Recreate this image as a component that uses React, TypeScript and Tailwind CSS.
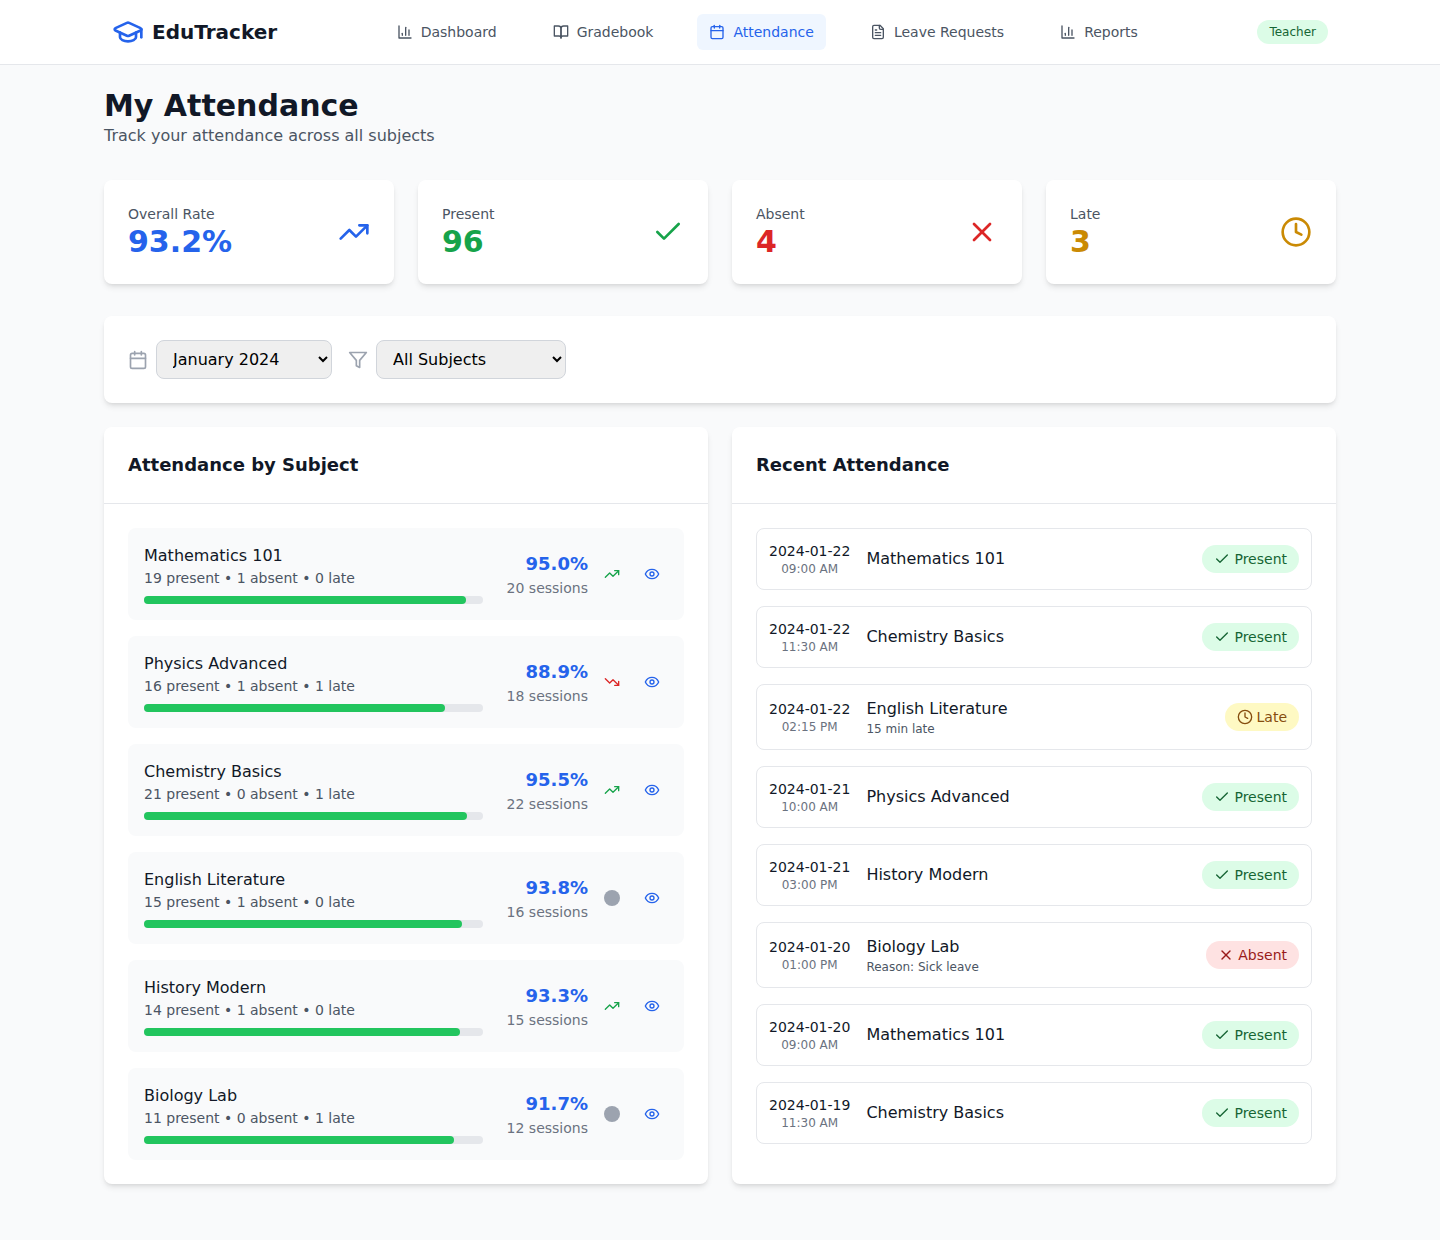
import type { ReactNode } from "react";

type IconProps = { className?: string };

function Icon({ className = "", children }: IconProps & { children: ReactNode }) {
  return (
    <svg
      viewBox="0 0 24 24"
      fill="none"
      stroke="currentColor"
      strokeWidth="2"
      strokeLinecap="round"
      strokeLinejoin="round"
      className={`shrink-0 ${className}`}
    >
      {children}
    </svg>
  );
}

const GraduationCap = (p: IconProps) => (
  <Icon {...p}>
    <path d="M21.42 10.922a1 1 0 0 0-.019-1.838L12.83 5.18a2 2 0 0 0-1.66 0L2.6 9.08a1 1 0 0 0 0 1.832l8.57 3.908a2 2 0 0 0 1.66 0z" />
    <path d="M22 10v6" />
    <path d="M6 12.5V16a6 3 0 0 0 12 0v-3.5" />
  </Icon>
);
const BarChart = (p: IconProps) => (
  <Icon {...p}>
    <path d="M3 3v18h18" />
    <path d="M18 17V9" />
    <path d="M13 17V5" />
    <path d="M8 17v-3" />
  </Icon>
);
const BookOpen = (p: IconProps) => (
  <Icon {...p}>
    <path d="M2 3h6a4 4 0 0 1 4 4v14a3 3 0 0 0-3-3H2z" />
    <path d="M22 3h-6a4 4 0 0 0-4 4v14a3 3 0 0 1 3-3h7z" />
  </Icon>
);
const Calendar = (p: IconProps) => (
  <Icon {...p}>
    <rect x="3" y="4" width="18" height="18" rx="2" />
    <path d="M16 2v4" />
    <path d="M8 2v4" />
    <path d="M3 10h18" />
  </Icon>
);
const FileText = (p: IconProps) => (
  <Icon {...p}>
    <path d="M15 2H6a2 2 0 0 0-2 2v16a2 2 0 0 0 2 2h12a2 2 0 0 0 2-2V7Z" />
    <path d="M14 2v4a2 2 0 0 0 2 2h4" />
    <path d="M10 9H8" />
    <path d="M16 13H8" />
    <path d="M16 17H8" />
  </Icon>
);
const TrendingUp = (p: IconProps) => (
  <Icon {...p}>
    <path d="M22 7 13.5 15.5 8.5 10.5 2 17" />
    <path d="M16 7h6v6" />
  </Icon>
);
const TrendingDown = (p: IconProps) => (
  <Icon {...p}>
    <path d="M22 17 13.5 8.5 8.5 13.5 2 7" />
    <path d="M16 17h6v-6" />
  </Icon>
);
const Check = (p: IconProps) => (
  <Icon {...p}>
    <path d="M20 6 9 17l-5-5" />
  </Icon>
);
const Cross = (p: IconProps) => (
  <Icon {...p}>
    <path d="M18 6 6 18" />
    <path d="m6 6 12 12" />
  </Icon>
);
const Clock = (p: IconProps) => (
  <Icon {...p}>
    <circle cx="12" cy="12" r="10" />
    <path d="M12 6v6l4 2" />
  </Icon>
);
const Filter = (p: IconProps) => (
  <Icon {...p}>
    <path d="M22 3H2l8 9.46V19l4 2v-8.54z" />
  </Icon>
);
const Eye = (p: IconProps) => (
  <Icon {...p}>
    <path d="M2 12s3-7 10-7 10 7 10 7-3 7-10 7-10-7-10-7Z" />
    <circle cx="12" cy="12" r="3" />
  </Icon>
);

const navItems = [
  { label: "Dashboard", icon: BarChart },
  { label: "Gradebook", icon: BookOpen },
  { label: "Attendance", icon: Calendar, active: true },
  { label: "Leave Requests", icon: FileText },
  { label: "Reports", icon: BarChart },
];

const stats = [
  { label: "Overall Rate", value: "93.2%", icon: TrendingUp, color: "text-[#2563eb]" },
  { label: "Present", value: "96", icon: Check, color: "text-[#16a34a]" },
  { label: "Absent", value: "4", icon: Cross, color: "text-[#dc2626]" },
  { label: "Late", value: "3", icon: Clock, color: "text-[#ca8a04]" },
];

const subjects = [
  { name: "Mathematics 101", present: 19, absent: 1, late: 0, rate: 95.0, sessions: 20, trend: "up" },
  { name: "Physics Advanced", present: 16, absent: 1, late: 1, rate: 88.9, sessions: 18, trend: "down" },
  { name: "Chemistry Basics", present: 21, absent: 0, late: 1, rate: 95.5, sessions: 22, trend: "up" },
  { name: "English Literature", present: 15, absent: 1, late: 0, rate: 93.8, sessions: 16, trend: "stable" },
  { name: "History Modern", present: 14, absent: 1, late: 0, rate: 93.3, sessions: 15, trend: "up" },
  { name: "Biology Lab", present: 11, absent: 0, late: 1, rate: 91.7, sessions: 12, trend: "stable" },
];

type Status = "Present" | "Late" | "Absent";

const records: { date: string; time: string; subject: string; note?: string; status: Status }[] = [
  { date: "2024-01-22", time: "09:00 AM", subject: "Mathematics 101", status: "Present" },
  { date: "2024-01-22", time: "11:30 AM", subject: "Chemistry Basics", status: "Present" },
  { date: "2024-01-22", time: "02:15 PM", subject: "English Literature", note: "15 min late", status: "Late" },
  { date: "2024-01-21", time: "10:00 AM", subject: "Physics Advanced", status: "Present" },
  { date: "2024-01-21", time: "03:00 PM", subject: "History Modern", status: "Present" },
  { date: "2024-01-20", time: "01:00 PM", subject: "Biology Lab", note: "Reason: Sick leave", status: "Absent" },
  { date: "2024-01-20", time: "09:00 AM", subject: "Mathematics 101", status: "Present" },
  { date: "2024-01-19", time: "11:30 AM", subject: "Chemistry Basics", status: "Present" },
];

const badges = {
  Present: { icon: Check, style: "bg-[#dcfce7] text-[#166534]" },
  Late: { icon: Clock, style: "bg-[#fef9c3] text-[#854d0e]" },
  Absent: { icon: Cross, style: "bg-[#fee2e2] text-[#991b1b]" },
};

function Trend({ trend }: { trend: string }) {
  if (trend === "up") return <TrendingUp className="size-4 text-[#16a34a]" />;
  if (trend === "down") return <TrendingDown className="size-4 text-[#dc2626]" />;
  return <div className="size-4 rounded-full bg-[#9ca3af]" />;
}

function Panel({ title, children }: { title: string; children: ReactNode }) {
  return (
    <section className="rounded-lg bg-white shadow-md">
      <div className="border-b border-[#e5e7eb] p-6">
        <h2 className="text-lg font-semibold">{title}</h2>
      </div>
      <div className="space-y-4 p-6">{children}</div>
    </section>
  );
}

export default function App() {
  return (
    <div className="min-h-screen bg-[#f9fafb] font-['DejaVu_Sans',sans-serif] text-[#111827]">
      <header className="border-b border-[#e5e7eb] bg-white">
        <div className="mx-auto flex h-16 max-w-[1216px] items-center justify-between">
          <div className="flex items-center gap-2">
            <GraduationCap className="size-8 text-[#2563eb]" />
            <span className="text-xl font-bold">EduTracker</span>
          </div>
          <nav className="flex gap-8">
            {navItems.map(({ label, icon: NavIcon, active }) => (
              <a
                key={label}
                className={`flex items-center gap-2 rounded-md px-3 py-2 text-sm ${
                  active ? "bg-[#eff6ff] text-[#2563eb]" : "text-[#4b5563]"
                }`}
              >
                <NavIcon className="size-4" />
                <span>{label}</span>
              </a>
            ))}
          </nav>
          <span className="rounded-full bg-[#dcfce7] px-3 py-1 text-xs text-[#166534]">Teacher</span>
        </div>
      </header>

      <main className="mx-auto max-w-[1232px] pt-[23px] pb-8">
        <h1 className="text-3xl font-bold">My Attendance</h1>
        <p className="text-[#4b5563]">Track your attendance across all subjects</p>

        <div className="mt-8 grid grid-cols-4 gap-6">
          {stats.map(({ label, value, icon: StatIcon, color }) => (
            <div key={label} className="flex items-center justify-between rounded-lg bg-white p-6 shadow-md">
              <div>
                <p className="text-sm text-[#4b5563]">{label}</p>
                <p className={`text-3xl font-bold ${color}`}>{value}</p>
              </div>
              <StatIcon className={`size-8 ${color}`} />
            </div>
          ))}
        </div>

        <div className="mt-8 flex items-center gap-4 rounded-lg bg-white p-6 shadow-md">
          <div className="flex items-center gap-2">
            <Calendar className="size-5 text-[#9ca3af]" />
            <select className="h-[39px] w-44 rounded-lg border border-[#d1d5db] bg-[#efefef] px-3 py-2 text-black">
              <option>January 2024</option>
            </select>
          </div>
          <div className="flex items-center gap-2">
            <Filter className="size-5 text-[#9ca3af]" />
            <select className="h-[39px] w-[190px] rounded-lg border border-[#d1d5db] bg-[#efefef] px-3 py-2 text-black">
              <option>All Subjects</option>
            </select>
          </div>
        </div>

        <div className="mt-6 grid grid-cols-2 gap-6">
          <Panel title="Attendance by Subject">
            {subjects.map((s) => (
              <div key={s.name} className="flex items-center rounded-lg bg-[#f9fafb] p-4">
                <div className="flex-1">
                  <h3>{s.name}</h3>
                  <p className="text-sm text-[#4b5563]">
                    {s.present} present • {s.absent} absent • {s.late} late
                  </p>
                  <div className="mt-2 h-2 rounded-full bg-[#e5e7eb]">
                    <div className="h-2 rounded-full bg-[#22c55e]" style={{ width: `${s.rate}%` }} />
                  </div>
                </div>
                <div className="ml-6 flex items-center gap-4">
                  <div className="text-right">
                    <p className="text-lg font-bold text-[#2563eb]">{s.rate.toFixed(1)}%</p>
                    <p className="text-sm text-[#6b7280]">{s.sessions} sessions</p>
                  </div>
                  <Trend trend={s.trend} />
                  <button className="p-2 text-[#2563eb]" aria-label={`View ${s.name}`}>
                    <Eye className="size-4" />
                  </button>
                </div>
              </div>
            ))}
          </Panel>

          <Panel title="Recent Attendance">
            {records.map((r) => {
              const { icon: BadgeIcon, style } = badges[r.status];
              return (
                <div
                  key={r.date + r.time}
                  className="flex items-center justify-between rounded-lg border border-[#e5e7eb] p-3"
                >
                  <div className="flex items-center gap-4">
                    <div className="text-center">
                      <p className="text-sm">{r.date}</p>
                      <p className="text-xs text-[#6b7280]">{r.time}</p>
                    </div>
                    <div>
                      <p>{r.subject}</p>
                      {r.note && <p className="text-xs text-[#4b5563]">{r.note}</p>}
                    </div>
                  </div>
                  <span className={`flex items-center gap-1 rounded-full px-3 py-1 text-sm ${style}`}>
                    <BadgeIcon className="size-4" />
                    {r.status}
                  </span>
                </div>
              );
            })}
          </Panel>
        </div>
      </main>
    </div>
  );
}
